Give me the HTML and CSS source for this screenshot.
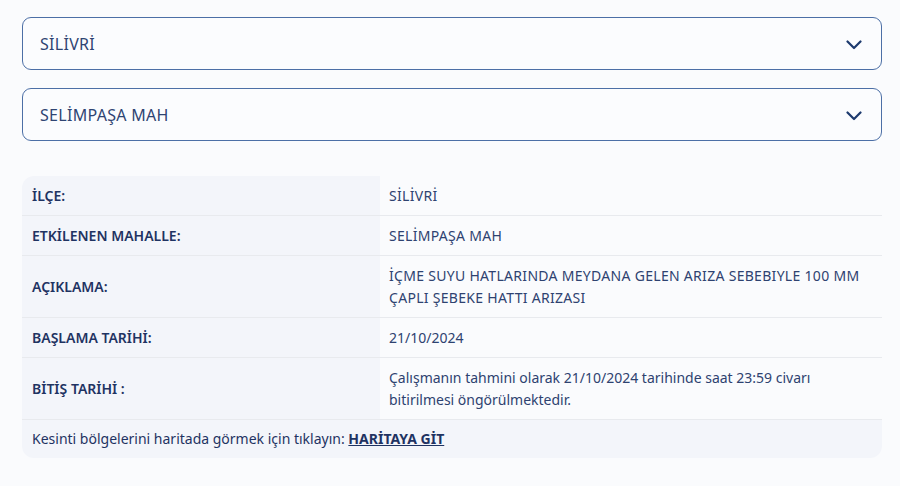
FILE: index.html
```html
<!DOCTYPE html>
<html lang="tr">
<head>
<meta charset="utf-8">
<link rel="stylesheet" href="styles.css">
</head>
<body>
<div class="page">
  <div class="select">
    <span class="select-text">SİLİVRİ</span>
    <svg class="chev" width="16" height="10" viewBox="0 0 16 10"><path d="M1.5 1.5 L8 8 L14.5 1.5" fill="none" stroke="#1d3a6e" stroke-width="2.2" stroke-linecap="round" stroke-linejoin="round"/></svg>
  </div>
  <div class="select">
    <span class="select-text">SELİMPAŞA MAH</span>
    <svg class="chev" width="16" height="10" viewBox="0 0 16 10"><path d="M1.5 1.5 L8 8 L14.5 1.5" fill="none" stroke="#1d3a6e" stroke-width="2.2" stroke-linecap="round" stroke-linejoin="round"/></svg>
  </div>
  <div class="info">
    <div class="row">
      <div class="label">İLÇE:</div>
      <div class="value caps">SİLİVRİ</div>
    </div>
    <div class="row">
      <div class="label">ETKİLENEN MAHALLE:</div>
      <div class="value caps">SELİMPAŞA MAH</div>
    </div>
    <div class="row">
      <div class="label">AÇIKLAMA:</div>
      <div class="value caps">İÇME SUYU HATLARINDA MEYDANA GELEN ARIZA SEBEBIYLE 100 MM<br>ÇAPLI ŞEBEKE HATTI ARIZASI</div>
    </div>
    <div class="row">
      <div class="label">BAŞLAMA TARİHİ:</div>
      <div class="value">21/10/2024</div>
    </div>
    <div class="row">
      <div class="label">BİTİŞ TARİHİ :</div>
      <div class="value">Çalışmanın tahmini olarak 21/10/2024 tarihinde saat 23:59 civarı<br>bitirilmesi öngörülmektedir.</div>
    </div>
    <div class="foot">Kesinti bölgelerini haritada görmek için tıklayın: <a class="maplink" href="#">HARİTAYA GİT</a></div>
  </div>
</div>
</body>
</html>
```

FILE: styles.css
```css
html, body {
  margin: 0;
  padding: 0;
  background: #fafbfd;
}
body {
  font-family: "Noto Sans", sans-serif;
  color: #2a3d68;
}
.page {
  padding: 17px 18px 0 22px;
  display: flex;
  flex-direction: column;
}
.select {
  height: 53px;
  box-sizing: border-box;
  border: 1.5px solid #4c6fa6;
  border-radius: 9px;
  background: #fbfcfe;
  display: flex;
  align-items: center;
  justify-content: space-between;
  padding: 0 19px 0 17px;
  margin-bottom: 18px;
}
.select-text {
  font-size: 16px;
  letter-spacing: 0.3px;
  color: #2f4472;
}
.chev {
  display: block;
  margin-top: 2px;
}
.info {
  margin-top: 17px;
  border-radius: 12px;
  overflow: hidden;
}
.row {
  display: grid;
  grid-template-columns: 358px 1fr;
  border-bottom: 1px solid #e8eaee;
}
.label {
  background: #f3f5fa;
  padding: 9px 10px 8px;
  font-size: 14px;
  line-height: 22px;
  font-weight: 600;
  color: #1f3362;
  display: flex;
  align-items: center;
}
.value {
  background: #fafbfd;
  padding: 9px 9px 8px;
  font-size: 14px;
  line-height: 22px;
  color: #2e4270;
}
.caps {
  letter-spacing: 0.3px;
}
.foot {
  background: #f3f5fa;
  padding: 8px 10px 9px;
  font-size: 14px;
  line-height: 21px;
  color: #1f3362;
}
.maplink {
  color: #1f3362;
  font-weight: 700;
  text-decoration: underline;
}
```
